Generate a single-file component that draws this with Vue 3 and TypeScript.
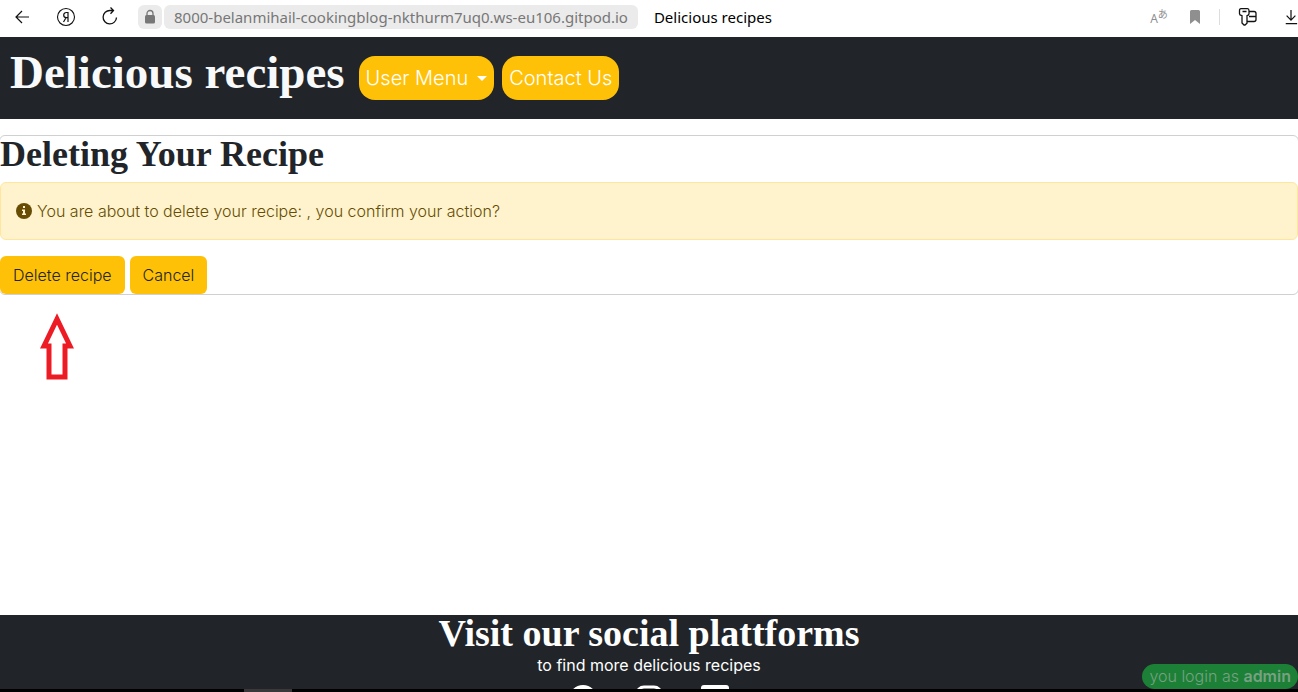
<script setup lang="ts">
const address = '8000-belanmihail-cookingblog-nkthurm7uq0.ws-eu106.gitpod.io'
const recipeTitle = ''
const user = 'admin'
</script>

<template>
  <div class="window">
    <header class="browser">
      <button class="tool" type="button" aria-label="Back">
        <svg width="20" height="20" viewBox="0 0 20 20" fill="none" stroke="#111" stroke-width="1.2"><path d="M17 10H4M10 4L4 10l6 6" /></svg>
      </button>
      <button class="tool" type="button" aria-label="Home">
        <svg width="20" height="20" viewBox="0 0 20 20" fill="none" stroke="#111"><circle cx="10" cy="10" r="8.5" stroke-width="1.1" /><path d="M12 15V5.500h-1.700a2.600 2.600 0 0 0 0 5.200H12M10 10.700L7.500 15" stroke-width="1.200" /></svg>
      </button>
      <button class="tool" type="button" aria-label="Reload">
        <svg width="20" height="20" viewBox="0 0 20 20" fill="none" stroke="#111" stroke-width="1.3"><path d="M16.500 10.500a6.700 6.700 0 1 1-6.500-7h3.500M10.500 .500l3 3-3 3.200" /></svg>
      </button>
      <button class="lock" type="button" aria-label="Site information">
        <svg width="12" height="16" viewBox="0 0 12 16"><rect x="1" y="6" width="10" height="8.500" rx="1.500" fill="#777" /><path d="M3 7V4.500a3 3 0 0 1 6 0V7" fill="none" stroke="#777" stroke-width="1.300" /></svg>
      </button>
      <a class="address" href="#">{{ address }}</a>
      <span class="tab-title">Delicious recipes</span>
      <div class="tools">
        <button class="tool translate" type="button" aria-label="Translate">
          <span class="latin">A</span><span class="kana">あ</span>
        </button>
        <button class="tool bookmark" type="button" aria-label="Bookmark">
          <svg width="12" height="16" viewBox="0 0 12 16"><path d="M1 2.500Q1 1 2.500 1h7Q11 1 11 2.500V15l-5-4-5 4z" fill="#8f8f8f" /></svg>
        </button>
        <span class="divider"></span>
        <button class="tool keys" type="button" aria-label="Passwords">
          <svg width="20" height="20" viewBox="0 0 20 20" fill="none" stroke="#111" stroke-width="1.300"><path d="M3 1.700h6.500q1.500 0 1.500 2v3q0 1.500-2 2v7.500L7 18H6l-2-2V8.700q-2.500-.500-2.500-2v-3q0-2 1.500-2zM4.500 4.500h4M11 4.500h5q2 0 2 2v6q0 2-2 2H9M11 9.500h7" /></svg>
        </button>
        <button class="tool download" type="button" aria-label="Downloads">
          <svg width="16" height="20" viewBox="0 0 16 20" fill="none" stroke="#111" stroke-width="1.400"><path d="M8 2v11M3 8.500l5 5 5-5M2 17.500h13" /></svg>
        </button>
      </div>
    </header>

    <div class="page">
      <nav class="navbar">
        <a class="brand" href="#">Delicious recipes</a>
        <button class="pill" type="button">User Menu<span class="caret"></span></button>
        <a class="pill" href="#">Contact Us</a>
      </nav>

      <main class="content">
        <section class="card">
          <h1>Deleting Your Recipe</h1>
          <div class="alert" role="alert">
            <svg width="16" height="16" viewBox="0 0 16 16"><circle cx="8" cy="8" r="8" fill="#664d03" /><path d="M7 3h2v2H7zM6 6.500h3v4h1V12H6v-1.500h1V8H6z" fill="#fff3cd" /></svg>
            <span>You are about to delete your recipe: {{ recipeTitle }}, you confirm your action?</span>
          </div>
          <div class="actions">
            <button class="btn" type="button">Delete recipe</button>
            <button class="btn" type="button">Cancel</button>
          </div>
        </section>
        <svg class="pointer" width="34" height="68" viewBox="0 0 34 68" fill="none" stroke="#ed1c24" stroke-width="5"><path d="M17 6L4 33h5v31h16V33h5z" /></svg>
      </main>

      <footer class="footer">
        <h2>Visit our social plattforms</h2>
        <p>to find more delicious recipes</p>
        <div class="social">
          <a href="#" aria-label="Facebook"><svg width="28" height="28" viewBox="0 0 28 28"><circle cx="14" cy="14" r="14" fill="#fff" /><path d="M12 28V17H9v-4h3v-3q0-4 4-4h3v4h-2q-1 0-1 1v2h3l-1 4h-2v11z" fill="#212529" /></svg></a>
          <a href="#" aria-label="Instagram"><svg width="28" height="28" viewBox="0 0 28 28" fill="none" stroke="#fff" stroke-width="3"><rect x="2" y="2" width="24" height="24" rx="7" /><circle cx="14" cy="14" r="6" /></svg></a>
          <a href="#" aria-label="YouTube"><svg width="28" height="28" viewBox="0 0 28 28"><rect width="28" height="28" rx="3" fill="#fff" /><path d="M11 9l9 5-9 5z" fill="#212529" /></svg></a>
        </div>
      </footer>
      <div class="login">you login as <b>{{ user }}</b></div>
    </div>
    <div class="taskbar"><span class="task"></span></div>
  </div>
</template>

<style>
body {
  margin: 0;
}
</style>

<style scoped>
* {
  box-sizing: border-box;
}
button {
  border: 0;
  margin: 0;
  font: inherit;
  color: inherit;
  cursor: pointer;
}
a {
  color: inherit;
  text-decoration: none;
}
.window {
  display: flex;
  flex-direction: column;
  height: 100vh;
  overflow: hidden;
  background: #fff;
  color: #212529;
  font: 300 16px/24px Inter, "Liberation Sans", sans-serif;
}
.browser {
  display: flex;
  align-items: center;
  flex: none;
  height: 37px;
  padding: 0 0 3px 12px;
  color: #000;
  font: 400 15px/24px "Noto Sans", "Noto Sans CJK JP", sans-serif;
}
.tool {
  display: flex;
  align-items: center;
  justify-content: center;
  width: 20px;
  height: 24px;
  margin-right: 24px;
  padding: 0;
  background: none;
}
.lock {
  display: flex;
  align-items: center;
  justify-content: center;
  width: 24px;
  height: 24px;
  margin: 0 2px 0 -6px;
  padding: 0;
  border-radius: 6px;
  background: #ebebeb;
}
.address {
  padding: 0 10px;
  border-radius: 6px;
  background: #ebebeb;
  color: #777;
}
.tab-title {
  margin-left: 16px;
}
.tools {
  display: flex;
  align-items: center;
  margin-left: auto;
}
.translate {
  margin-right: 20px;
  align-items: flex-start;
  color: #8f8f8f;
}
.latin {
  font-size: 12px;
  line-height: 28px;
}
.kana {
  font-size: 10px;
  line-height: 18px;
}
.bookmark {
  width: 12px;
  margin-right: 18px;
}
.divider {
  width: 1px;
  height: 16px;
  margin-right: 18px;
  background: #ddd;
}
.keys {
  margin-right: 26px;
}
.download {
  width: 14px;
  margin: 0;
  overflow: hidden;
  justify-content: flex-start;
}
.page {
  position: relative;
  display: flex;
  flex: 1;
  flex-direction: column;
  min-height: 0;
  overflow: hidden;
}
.navbar {
  display: flex;
  align-items: center;
  flex: none;
  gap: 8px;
  min-height: 82px;
  padding: 0 10px;
  background: #212529;
}
.brand,
h1,
h2 {
  margin: 0;
  font-family: "Liberation Serif", serif;
  font-weight: 700;
}
.brand {
  margin-right: 6px;
  padding-bottom: 12px;
  color: #f8f9fa;
  font-size: 47px;
  line-height: 56px;
}
.pill {
  display: flex;
  align-items: center;
  height: 44px;
  padding: 0 7px;
  border-radius: 16px;
  background: #ffc107;
  color: #fff;
  font-size: 20px;
}
.caret {
  margin-left: 9px;
  border: 5px solid transparent;
  border-top-color: #fff;
  border-bottom: 0;
}
.content {
  flex: 1;
  padding-top: 16px;
}
.card {
  margin: 0 -1px;
  border: 1px solid #ced0d2;
  border-radius: 6px;
}
h1 {
  margin-bottom: 10px;
  font-size: 36px;
  line-height: 36px;
}
.alert {
  display: flex;
  align-items: center;
  gap: 5px;
  margin-bottom: 16px;
  padding: 16px 15px;
  border: 1px solid #ffe69c;
  border-radius: 6px;
  background: #fff3cd;
  color: #664d03;
}
.actions {
  display: flex;
  gap: 5px;
}
.btn {
  padding: 7px 13px;
  border-radius: 6px;
  background: #ffc107;
}
.pointer {
  display: block;
  margin: 18px 0 0 40px;
}
.footer {
  flex: none;
  height: 74px;
  background: #212529;
  color: #fff;
  text-align: center;
}
h2 {
  font-size: 38px;
  line-height: 36px;
}
p {
  margin: 0;
  padding-top: 2px;
  font-weight: 400;
}
.social {
  display: flex;
  justify-content: center;
  gap: 38px;
  padding-top: 8px;
}
.login {
  position: absolute;
  right: 0;
  bottom: 0;
  padding: 0 7px;
  border-radius: 13px;
  background: #1c8136;
  color: #78a083;
  line-height: 25px;
}
.login b {
  font-weight: 600;
}
.taskbar {
  flex: none;
  height: 3px;
  padding-left: 244px;
  background: #000;
}
.task {
  display: block;
  width: 48px;
  height: 3px;
  background: #3c3739;
}
</style>
